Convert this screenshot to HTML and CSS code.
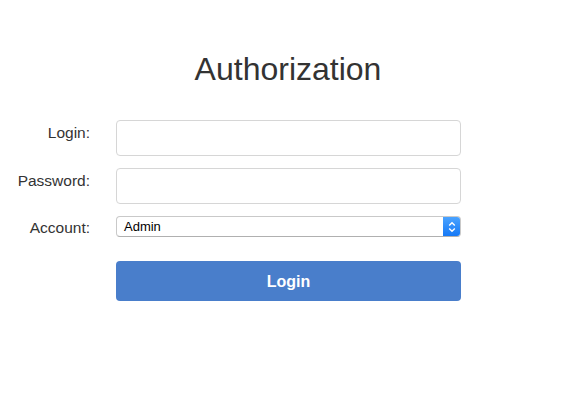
FILE: index.html
```html
<!DOCTYPE html>
<html>
<head>
<meta charset="utf-8">
<link rel="stylesheet" href="styles.css">
</head>
<body>
<div class="page">
  <h1 class="title">Authorization</h1>
  <form class="form">
    <label class="label">Login:</label>
    <div class="input"></div>
    <label class="label">Password:</label>
    <div class="input"></div>
    <label class="label label-select">Account:</label>
    <div class="select">
      <span class="select-text">Admin</span>
      <span class="select-arrow">
        <svg width="8" height="12" viewBox="0 0 8 12"><path d="M1.2 4.6 L4 1.8 L6.8 4.6 M1.2 7.4 L4 10.2 L6.8 7.4" fill="none" stroke="#fff" stroke-width="1.4"/></svg>
      </span>
    </div>
    <div></div>
    <div class="button">Login</div>
  </form>
</div>
</body>
</html>
```
FILE: styles.css
```css
html, body {
  margin: 0;
  padding: 0;
  background: #fff;
}
.page {
  width: 570px;
  height: 400px;
  font-family: "Liberation Sans", Arial, sans-serif;
  color: #333;
}
.title {
  margin: 0;
  padding-top: 51px;
  padding-left: 6px;
  font-size: 32px;
  line-height: 36px;
  font-weight: normal;
  text-align: center;
  color: #333;
}
.form {
  margin-top: 33px;
  display: grid;
  grid-template-columns: 90px 345px;
  column-gap: 26px;
  row-gap: 12px;
}
.label {
  font-size: 15.5px;
  line-height: 20px;
  padding-top: 3px;
  text-align: right;
  color: #333;
}
.label-select {
  padding-top: 2px;
  line-height: 19px;
}
.input {
  height: 34px;
  border: 1px solid #d6d6d6;
  border-radius: 4px;
  background: #fff;
}
.select {
  height: 19px;
  border: 1px solid #c9c9c9;
  border-bottom-color: #b0b0b0;
  border-radius: 4px;
  background: #fff;
  display: flex;
  align-items: center;
  position: relative;
  overflow: hidden;
}
.select-text {
  flex: 1;
  padding-left: 7px;
  font-size: 13px;
  color: #000;
}
.select-arrow {
  width: 17px;
  height: 100%;
  background: linear-gradient(#4aa3ff, #1679f6);
  display: flex;
  align-items: center;
  justify-content: center;
}
.button {
  margin-top: 12px;
  height: 40px;
  padding-top: 2px;
  box-sizing: border-box;
  border-radius: 4px;
  background: #497ecb;
  color: #fff;
  font-weight: bold;
  font-size: 16px;
  display: flex;
  align-items: center;
  justify-content: center;
}
```
